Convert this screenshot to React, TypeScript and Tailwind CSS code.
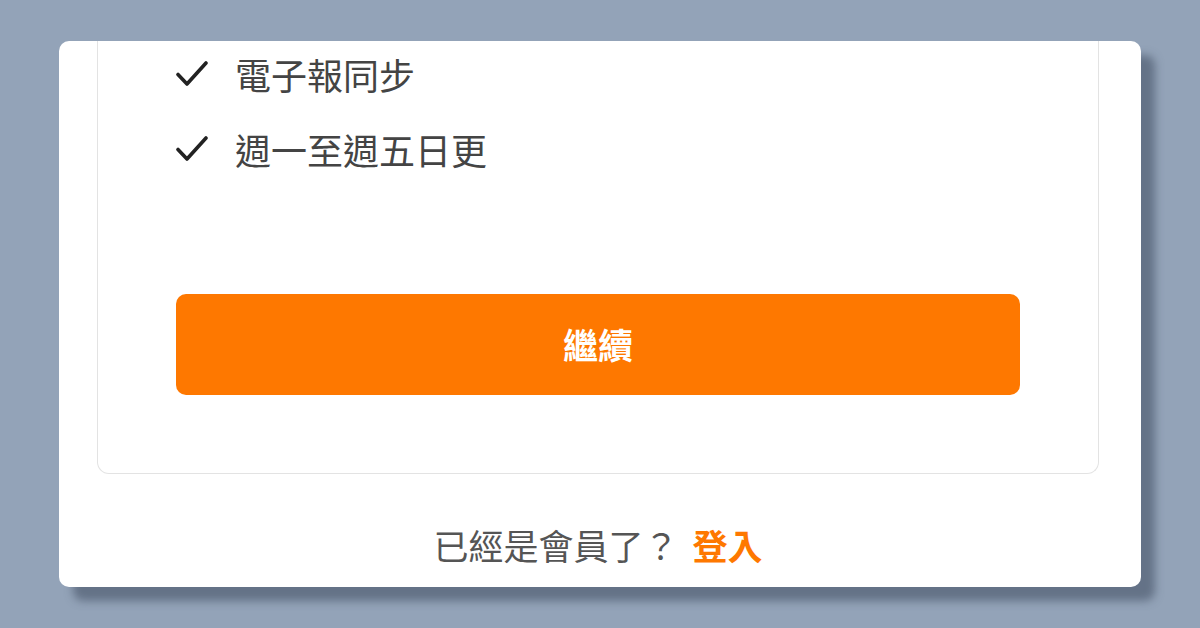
import React from "react";

function Check() {
  return (
    <svg width="32" height="26" viewBox="0 0 32 26" className="shrink-0">
      <path d="M2 13.5 L11 23 L30 2" fill="none" stroke="#222222" strokeWidth="3.6" strokeLinecap="round" strokeLinejoin="round" />
    </svg>
  );
}

export default function App() {
  const font = { fontFamily: '"Noto Sans CJK TC", "Noto Sans", sans-serif' };
  return (
    <div className="w-[1200px] h-[628px] bg-[#93a3b8] pt-[41px] pl-[59px]" style={font}>
      <div className="w-[1082px] h-[546px] bg-white rounded-[10px] overflow-hidden shadow-[14px_14px_8px_rgba(62,74,94,0.55)] flex flex-col pl-[38px] pr-[42px]">
        <div className="border-x border-b border-[#e3e3e3] rounded-b-[12px] px-[78px] pb-[78px] flex flex-col">
          <div className="h-[66px] flex items-center gap-[27px] text-[36px] text-[#444444]">
            <Check />
            <span className="leading-none">電子報同步</span>
          </div>
          <div className="mt-[9px] h-[66px] flex items-center gap-[27px] text-[36px] text-[#444444]">
            <Check />
            <span className="leading-none">週一至週五日更</span>
          </div>
          <button className="mt-[112px] h-[101px] w-full rounded-[10px] bg-[#fe7800] text-white text-[35px] font-bold flex items-center justify-center">
            繼續
          </button>
        </div>
        <div className="mt-[48px] h-[44px] flex items-center justify-center text-[35px] leading-none">
          <span className="text-[#555555]">已經是會員了？</span>
          <span className="ml-[14px] text-[#fe7800] font-bold">登入</span>
        </div>
      </div>
    </div>
  );
}
